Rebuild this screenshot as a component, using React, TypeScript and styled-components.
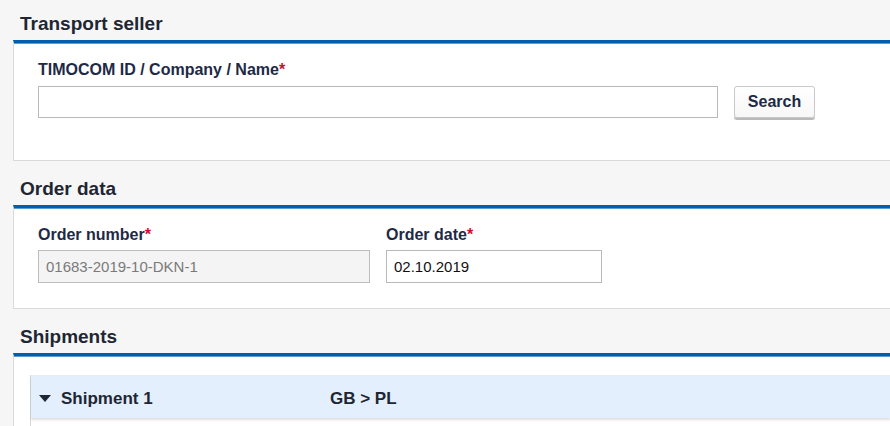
import React from "react";
import styled, { createGlobalStyle } from "styled-components";

const GlobalStyle = createGlobalStyle`
  html, body {
    margin: 0;
    padding: 0;
    background: #f6f6f6;
    overflow: hidden;
  }
  body {
    font-family: "Liberation Sans", Arial, sans-serif;
    color: #1e2a45;
  }
  * { box-sizing: border-box; }
`;

const Page = styled.div`
  padding: 13px 0 0 13px;
  width: 890px;
  height: 426px;
  overflow: hidden;
`;

const Section = styled.section`
  display: flex;
  flex-direction: column;
  & + & {
    margin-top: 17px;
  }
`;

const SectionTitle = styled.h2`
  margin: 0 0 5px 0;
  padding-left: 7px;
  font-size: 19px;
  line-height: 22px;
  font-weight: bold;
  color: #1f2633;
`;

const Panel = styled.div<{ $pt: number; $pb: number; $pl: number }>`
  background: #ffffff;
  border-top: 3px solid #005eab;
  box-shadow: inset 0 1px 0 #5f9ad3;
  border-left: 1px solid #dadada;
  border-bottom: 1px solid #dadada;
  padding: ${(p) => p.$pt}px 0 ${(p) => p.$pb}px ${(p) => p.$pl}px;
`;

const Row = styled.div`
  display: flex;
  align-items: flex-end;
  gap: 16px;
`;

const Field = styled.div<{ $w: number }>`
  display: flex;
  flex-direction: column;
  width: ${(p) => p.$w}px;
`;

const Label = styled.label<{ $gap: number }>`
  font-size: 16px;
  line-height: 18px;
  font-weight: bold;
  color: #1e2a45;
  margin-bottom: ${(p) => p.$gap}px;
`;

const Req = styled.span`
  color: #c4122f;
`;

const Input = styled.input<{ $h: number }>`
  height: ${(p) => p.$h}px;
  width: 100%;
  border: 1px solid #b9b9b9;
  background: #ffffff;
  padding: 0 7px;
  font-family: "Liberation Sans", Arial, sans-serif;
  font-size: 15px;
  color: #111111;
  outline: none;
  &:disabled {
    background: #f4f4f4;
    color: #7a7a7a;
    border-color: #bdbdbd;
  }
`;

const Button = styled.button`
  height: 32px;
  width: 81px;
  border: 1px solid #c9c9c9;
  border-radius: 3px;
  background: linear-gradient(#ffffff, #f7f7f7);
  box-shadow: 0 2px 0 #b9b9b9;
  font-family: "Liberation Sans", Arial, sans-serif;
  font-size: 16px;
  font-weight: bold;
  color: #1e2a45;
  padding: 0;
  cursor: pointer;
`;

const Card = styled.div`
  border-left: 1px solid #d6d6d6;
  border-top: 1px solid #ebebeb;
  height: 80px;
`;

const CardHeader = styled.div`
  display: flex;
  align-items: center;
  height: 42px;
  padding: 4px 0 0 8px;
  background: #e3effc;
  box-shadow: 0 2px 2px rgba(0, 0, 0, 0.13);
  color: #1f2633;
  font-size: 17px;
  font-weight: bold;
`;

const Caret = styled.svg`
  width: 12px;
  height: 8px;
  margin-right: 10px;
  flex: none;
`;

const CardTitle = styled.span`
  width: 269px;
`;

const Route = styled.span``;

export default function App() {
  return (
    <>
      <GlobalStyle />
      <Page>
        <Section>
          <SectionTitle>Transport seller</SectionTitle>
          <Panel $pt={18} $pb={42} $pl={24}>
            <Row>
              <Field $w={680}>
                <Label $gap={7}>
                  TIMOCOM ID / Company / Name<Req>*</Req>
                </Label>
                <Input $h={32} type="text" />
              </Field>
              <Button type="button">Search</Button>
            </Row>
          </Panel>
        </Section>
        <Section>
          <SectionTitle>Order data</SectionTitle>
          <Panel $pt={18} $pb={25} $pl={24}>
            <Row>
              <Field $w={332}>
                <Label $gap={6}>
                  Order number<Req>*</Req>
                </Label>
                <Input $h={33} type="text" disabled value="01683-2019-10-DKN-1" />
              </Field>
              <Field $w={216}>
                <Label $gap={6}>
                  Order date<Req>*</Req>
                </Label>
                <Input $h={33} type="text" defaultValue="02.10.2019" />
              </Field>
            </Row>
          </Panel>
        </Section>
        <Section>
          <SectionTitle>Shipments</SectionTitle>
          <Panel $pt={19} $pb={0} $pl={16}>
            <Card>
              <CardHeader>
                <Caret viewBox="0 0 12 8">
                  <path d="M0 0 L12 0 L6 7 Z" fill="#1f2633" />
                </Caret>
                <CardTitle>Shipment 1</CardTitle>
                <Route>GB &gt; PL</Route>
              </CardHeader>
            </Card>
          </Panel>
        </Section>
      </Page>
    </>
  );
}
